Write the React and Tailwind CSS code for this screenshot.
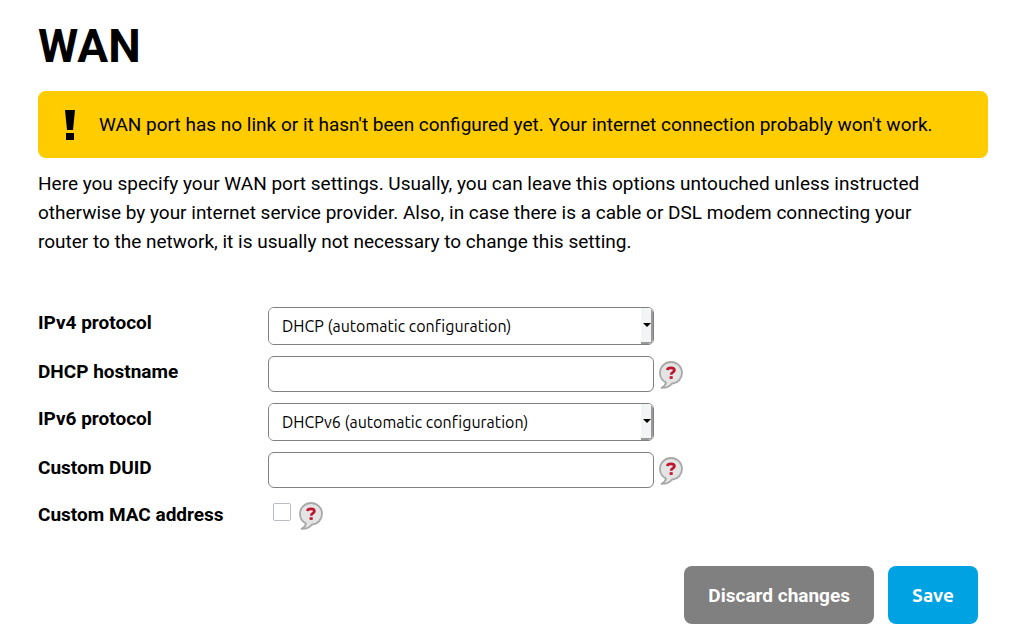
import { useState } from "react";

function HelpBubble({ topic }) {
  return (
    <button type="button" aria-label={`Help: ${topic}`} className="block h-7 w-6 shrink-0">
      <svg viewBox="0 0 24 28" className="h-7 w-6" aria-hidden="true">
        <path
          d="M12 1C5.9 1 1 5.8 1 11.8c0 4.300 2.500 8 6 9.800-.3 2.200-2 3.800-4.500 5.200 4.500.2 8.500-1.500 10.500-4.300C19 22 23 17.600 23 11.800 23 5.800 18.100 1 12 1Z"
          fill="#e4e4e4"
          stroke="#a9a9a9"
          strokeWidth="1.800"
          strokeLinejoin="round"
        />
        <path
          d="M8.300 8.900C8.600 7.300 10.200 6.900 12 6.900c2 0 3.400.8 3.400 2.300 0 2.100-3.200 2-3.200 4.600"
          fill="none"
          stroke="#be1530"
          strokeWidth="2.700"
        />
        <rect x="10.600" y="15.200" width="3.100" height="2.700" fill="#be1530" />
      </svg>
    </button>
  );
}

function Row({ id, label, children }) {
  return (
    <div className="flex items-start">
      <label htmlFor={id} className="w-[230px] shrink-0 text-[19px] leading-8 font-bold">
        {label}
      </label>
      {children}
    </div>
  );
}

function SelectField({ id, children }) {
  return (
    <div className="relative w-[386px] overflow-hidden rounded-md border border-[#808080]">
      <select
        id={id}
        className="block h-9 w-full appearance-none bg-white pt-px pr-6 pl-[13px] font-['Ubuntu','Noto_Sans',sans-serif] text-[16px] text-black [font-variant-ligatures:none]"
      >
        {children}
      </select>
      <span className="pointer-events-none absolute inset-y-0 right-0 flex w-3 items-center justify-end border-r-2 border-b-2 border-[#999999] bg-[#f3f4f5]">
        <svg viewBox="0 0 8 4" className="h-1 w-2" aria-hidden="true">
          <path d="M0 0h8L4 4Z" fill="#000" />
        </svg>
      </span>
    </div>
  );
}

function TextField({ id, label }) {
  return (
    <div className="flex items-start gap-[5px]">
      <input
        id={id}
        type="text"
        className="h-9 w-[386px] rounded-md border border-[#808080] bg-white px-3 font-['Ubuntu','Noto_Sans',sans-serif] text-[16px]"
      />
      <div className="pt-[5px]">
        <HelpBubble topic={label} />
      </div>
    </div>
  );
}

export default function App() {
  const [customMac, setCustomMac] = useState(false);

  return (
    <main className="bg-white pt-4 pr-[39px] pb-4 pl-[38px] font-['Roboto',sans-serif] text-[19px] leading-[29px] text-black">
      <h1 className="text-[46px] leading-[60px] font-bold">WAN</h1>

      <div role="alert" className="mt-[15px] flex min-h-[67px] items-center rounded-lg bg-[#ffcc00] pr-4 pl-[26px]">
        <svg viewBox="0 0 12 30" className="h-[30px] w-3 shrink-0" aria-hidden="true">
          <path d="M1 0h10L9 20H3Z" fill="#000" />
          <path d="M2 23h8v7H2Z" fill="#000" />
        </svg>
        <p className="pl-[23px]">
          WAN port has no link or it hasn't been configured yet. Your internet connection probably won't work.
        </p>
      </div>

      <p className="mt-[11px] pr-8">
        Here you specify your WAN port settings. Usually, you can leave this options untouched unless instructed
        otherwise by your internet service provider. Also, in case there is a cable or DSL modem connecting your
        router to the network, it is usually not necessary to change this setting.
      </p>

      <form className="mt-[51px]" onSubmit={(event) => event.preventDefault()}>
        <div className="flex flex-col gap-[11px]">
          <Row id="ipv4" label="IPv4 protocol">
            <SelectField id="ipv4">
              <option>DHCP (automatic configuration)</option>
              <option>Static IP address</option>
              <option>PPPoE</option>
            </SelectField>
          </Row>
          <Row id="hostname" label="DHCP hostname">
            <TextField id="hostname" label="DHCP hostname" />
          </Row>
          <Row id="ipv6" label="IPv6 protocol">
            <SelectField id="ipv6">
              <option>DHCPv6 (automatic configuration)</option>
              <option>Static IPv6 address</option>
              <option>Disabled</option>
            </SelectField>
          </Row>
          <Row id="duid" label="Custom DUID">
            <TextField id="duid" label="Custom DUID" />
          </Row>
          <Row id="mac" label="Custom MAC address">
            <div className="flex items-start gap-2 pt-[3px] pl-[5px]">
              <input
                id="mac"
                type="checkbox"
                checked={customMac}
                onChange={(event) => setCustomMac(event.target.checked)}
                className="mt-px size-[18px] appearance-none rounded-xs border border-[#b9bec4] bg-white checked:bg-[#00a2e2]"
              />
              <HelpBubble topic="Custom MAC address" />
            </div>
          </Row>
        </div>

        <div className="mt-[35px] flex justify-end gap-[14px] pr-[10px] font-bold text-white">
          <button type="reset" className="h-[58px] rounded-lg bg-[#808080] px-6">
            Discard changes
          </button>
          <button
            type="submit"
            className="h-[58px] rounded-lg bg-[#00a2e2] px-6 font-['Ubuntu','Noto_Sans',sans-serif]"
          >
            Save
          </button>
        </div>
      </form>
    </main>
  );
}
